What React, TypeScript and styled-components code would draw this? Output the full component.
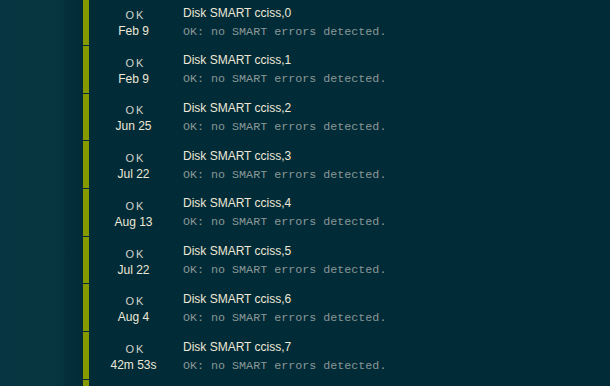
import React from 'react';
import styled, { createGlobalStyle } from 'styled-components';

const GlobalStyle = createGlobalStyle`
  html, body {
    margin: 0;
    padding: 0;
    background: #012b36;
  }
  body {
    font-family: "Liberation Sans", Arial, sans-serif;
  }
`;

const Page = styled.div`
  width: 610px;
  height: 386px;
  display: flex;
  overflow: hidden;
  background: #012b36;
`;

const Sidebar = styled.div`
  width: 83px;
  flex-shrink: 0;
  background: linear-gradient(
    to right,
    #073642 0px,
    #07353f 58px,
    #042f3a 68px,
    #022b36 83px
  );
`;

const List = styled.div`
  flex: 1;
  display: flex;
  flex-direction: column;
  gap: 1px;
  margin-top: -1.7px;
`;

const Row = styled.div`
  height: 46.7px;
  flex-shrink: 0;
  display: flex;
  border-left: 6px solid #869a00;
  box-sizing: border-box;
`;

const StatusCol = styled.div`
  width: 89px;
  flex-shrink: 0;
  display: flex;
  flex-direction: column;
  align-items: center;
  padding-top: 9.8px;
  box-sizing: border-box;
`;

const Status = styled.div`
  font-size: 11px;
  line-height: 14px;
  letter-spacing: 2px;
  padding-left: 4px;
  color: #d2d4cc;
`;

const Since = styled.div`
  font-size: 12px;
  line-height: 16px;
  margin-top: 1px;
  color: #ece8d8;
  white-space: nowrap;
`;

const InfoCol = styled.div`
  flex: 1;
  padding-top: 6.4px;
  padding-left: 5px;
`;

const Title = styled.div`
  font-size: 12px;
  line-height: 16px;
  color: #ece8d8;
  white-space: nowrap;
`;

const Output = styled.div`
  font-family: "Liberation Mono", "Courier New", monospace;
  font-size: 11.7px;
  line-height: 14px;
  margin-top: 4px;
  color: #8a9898;
  white-space: nowrap;
`;

const checks = [
  { since: 'Feb 9', disk: 0 },
  { since: 'Feb 9', disk: 1 },
  { since: 'Jun 25', disk: 2 },
  { since: 'Jul 22', disk: 3 },
  { since: 'Aug 13', disk: 4 },
  { since: 'Jul 22', disk: 5 },
  { since: 'Aug 4', disk: 6 },
  { since: '42m 53s', disk: 7 },
];

const App = () => (
  <>
    <GlobalStyle />
    <Page>
      <Sidebar />
      <List>
        {checks.map((c) => (
          <Row key={c.disk}>
            <StatusCol>
              <Status>OK</Status>
              <Since>{c.since}</Since>
            </StatusCol>
            <InfoCol>
              <Title>Disk SMART cciss,{c.disk}</Title>
              <Output>OK: no SMART errors detected.</Output>
            </InfoCol>
          </Row>
        ))}
        <Row />
      </List>
    </Page>
  </>
);

export default App;
